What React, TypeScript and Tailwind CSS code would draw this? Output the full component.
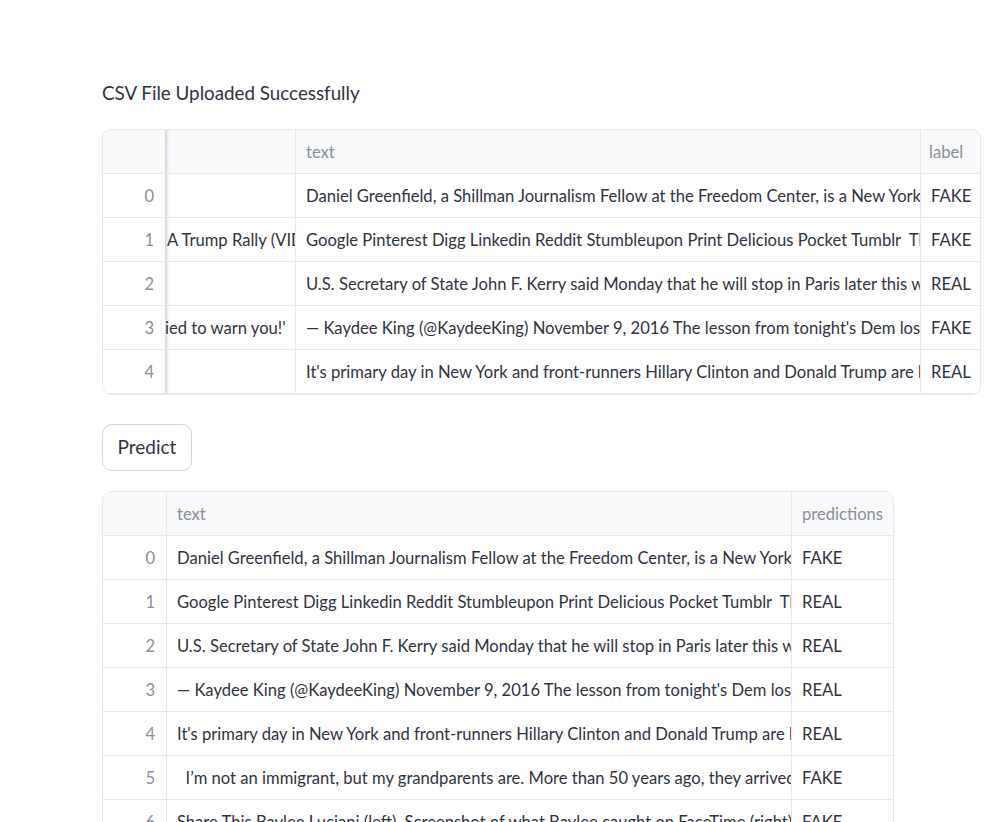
import React from "react";

const font = { fontFamily: "'Source Sans Pro', Lato, 'Liberation Sans', sans-serif" };

const uploaded = [
  {
    title: "",
    text: "Daniel Greenfield, a Shillman Journalism Fellow at the Freedom Center, is a New York writer focusing on radical Islam.",
    label: "FAKE",
  },
  {
    title: "A Trump Rally (VIDEO)",
    text: "Google Pinterest Digg Linkedin Reddit Stumbleupon Print Delicious Pocket Tumblr  There are two fundamental truths",
    label: "FAKE",
  },
  {
    title: "",
    text: "U.S. Secretary of State John F. Kerry said Monday that he will stop in Paris later this week, amid criticism",
    label: "REAL",
  },
  {
    title: "ied to warn you!'",
    text: "— Kaydee King (@KaydeeKing) November 9, 2016 The lesson from tonight's Dem losses: Time for Democrats",
    label: "FAKE",
  },
  {
    title: "",
    text: "It's primary day in New York and front-runners Hillary Clinton and Donald Trump are leading in the polls.",
    label: "REAL",
  },
];

const predicted = [
  { text: uploaded[0].text, pred: "FAKE" },
  { text: uploaded[1].text, pred: "REAL" },
  { text: uploaded[2].text, pred: "REAL" },
  { text: uploaded[3].text, pred: "REAL" },
  { text: uploaded[4].text, pred: "REAL" },
  {
    text: "  I’m not an immigrant, but my grandparents are. More than 50 years ago, they arrived in the United States",
    pred: "FAKE",
  },
  {
    text: "Share This Baylee Luciani (left), Screenshot of what Baylee caught on FaceTime (right), The closest",
    pred: "FAKE",
  },
];

const cell = "h-[44px] flex items-center pt-[2px] border-b border-[#e8e8ea] overflow-hidden whitespace-pre text-[16.6px]";
const head = "h-[44px] flex items-center pt-[2px] border-b border-[#e8e8ea] bg-[#f8f9fb] text-[16.6px] text-[#8d8f99]";

function UploadedTable() {
  return (
    <div className="w-[879px] border border-[#e8e8ea] rounded-[9px] overflow-hidden">
      <div className="grid grid-cols-[63px_130px_625px_61px]">
        <div className={head + " border-r border-r-[#d8d8dc]"} />
        <div className={head + " border-r shadow-[inset_3px_0_3px_-2px_#d0d0d4]"} />
        <div className={head + " border-r px-[10px]"}>text</div>
        <div className={head + " px-[8px]"}>label</div>
        {uploaded.map((r, i) => (
          <React.Fragment key={i}>
            <div className={cell + " justify-end pr-[11px] text-[#8d8f99] border-r border-r-[#d8d8dc]"}>{i}</div>
            <div className={cell + " border-r text-[#31333f] shadow-[inset_3px_0_3px_-2px_#d0d0d4]"}>
              <span className={i === 3 ? "-ml-[1px]" : "ml-[1px]"}>{r.title}</span>
            </div>
            <div className={cell + " border-r px-[10px] text-[#31333f]"}>{r.text}</div>
            <div className={cell + " px-[10px] text-[#31333f]"}>{r.label}</div>
          </React.Fragment>
        ))}
      </div>
    </div>
  );
}

function PredictionTable() {
  return (
    <div className="w-[792px] border border-[#e8e8ea] border-b-0 rounded-t-[9px] overflow-hidden">
      <div className="grid grid-cols-[64px_625px_103px]">
        <div className={head + " border-r"} />
        <div className={head + " border-r px-[10px]"}>text</div>
        <div className={head + " px-[10px]"}>predictions</div>
        {predicted.map((r, i) => (
          <React.Fragment key={i}>
            <div className={cell + " justify-end pr-[11px] text-[#8d8f99] border-r"}>{i}</div>
            <div className={cell + " border-r px-[10px] text-[#31333f]"}>{r.text}</div>
            <div className={cell + " px-[10px] text-[#31333f]"}>{r.pred}</div>
          </React.Fragment>
        ))}
      </div>
    </div>
  );
}

export default function App() {
  return (
    <div className="h-[822px] overflow-hidden bg-white pl-[102px] pt-[77px] text-[#31333f]" style={font}>
      <p className="h-[32px] leading-[32px] text-[18.8px]">CSV File Uploaded Successfully</p>
      <div className="mt-[20px]">
        <UploadedTable />
      </div>
      <button className="mt-[29px] h-[47px] w-[90px] rounded-[10px] border border-[#d5d6d9] bg-white text-[19px] text-[#31333f]">
        Predict
      </button>
      <div className="mt-[20px]">
        <PredictionTable />
      </div>
    </div>
  );
}
